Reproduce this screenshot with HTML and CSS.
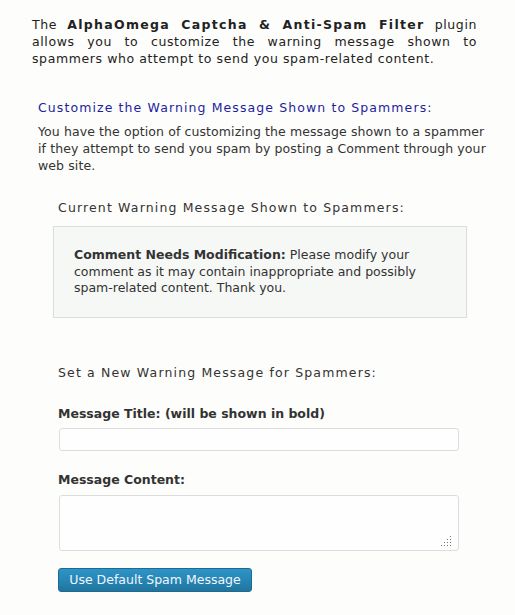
FILE: index.html
```html
<!DOCTYPE html>
<html>
<head>
<meta charset="utf-8">
<link rel="stylesheet" href="styles.css">
</head>
<body>
<div class="page">
  <p class="intro">The <strong>AlphaOmega Captcha &amp; Anti-Spam Filter</strong> plugin allows you to customize the warning message shown to spammers who attempt to send you spam-related content.</p>

  <section class="section">
    <h3 class="section-title">Customize the Warning Message Shown to Spammers:</h3>
    <p class="section-text">You have the option of customizing the message shown to a spammer<br>if they attempt to send you spam by posting a Comment through your<br>web site.</p>

    <div class="current">
      <h4 class="sub-title">Current Warning Message Shown to Spammers:</h4>
      <div class="message-box">
        <strong>Comment Needs Modification:</strong> Please modify your comment as it may contain inappropriate and possibly spam-related content. Thank you.
      </div>
    </div>

    <form class="new-form">
      <h4 class="sub-title">Set a New Warning Message for Spammers:</h4>
      <label class="field-label" for="msg-title">Message Title: (will be shown in bold)</label>
      <input class="text-input" id="msg-title" type="text">
      <label class="field-label field-label-2" for="msg-content">Message Content:</label>
      <textarea class="text-area" id="msg-content"></textarea>
      <button class="btn-primary" type="button">Use Default Spam Message</button>
    </form>
  </section>
</div>
</body>
</html>
```

FILE: styles.css
```css
html, body {
  margin: 0;
  padding: 0;
  background: #fdfdfb;
}

body {
  font-family: "DejaVu Sans", "Liberation Sans", sans-serif;
  font-size: 12.5px;
  color: #333;
}

.page {
  padding: 16px 38px 20px 32px;
}

.intro {
  margin: 0;
  line-height: 17px;
  text-align: justify;
  letter-spacing: 0.6px;
  color: #222;
}

.intro strong {
  letter-spacing: 1.3px;
}

.section {
  margin-top: 32px;
  padding-left: 6px;
}

.section-title {
  margin: 0;
  font-size: 12.5px;
  font-weight: normal;
  line-height: 17px;
  letter-spacing: 1.1px;
  color: #1d1d9e;
}

.section-text {
  margin: 7px -16px 0 0;
  font-size: 12.5px;
  letter-spacing: 0.1px;
  line-height: 17px;
  color: #333;
}

.current {
  margin-top: 25px;
  width: 414px;
  margin-left: 15px;
}

.sub-title {
  margin: 0 0 0 5px;
  font-size: 12.5px;
  font-weight: normal;
  line-height: 17px;
  letter-spacing: 1.15px;
  color: #333;
}

.message-box {
  margin-top: 10px;
  background: #f6f8f6;
  border: 1px solid #dcdcdc;
  padding: 20px 20px 20px 20px;
  line-height: 16.5px;
  color: #333;
}

.new-form {
  display: flex;
  flex-direction: column;
  align-items: flex-start;
  margin-top: 46px;
  margin-left: 15px;
}

.field-label {
  margin: 24px 0 0 5px;
  font-weight: bold;
  line-height: 17px;
  color: #333;
}

.field-label-2 {
  margin-top: 20px;
}

.text-input {
  margin: 6px 0 0 6px;
  box-sizing: border-box;
  width: 400px;
  height: 23px;
  border: 1px solid #dddddd;
  border-radius: 3px;
  background: #fefefe;
  font: inherit;
  padding: 2px 4px;
}

.text-area {
  margin: 7px 0 0 6px;
  box-sizing: border-box;
  width: 400px;
  height: 56px;
  border: 1px solid #dddddd;
  border-radius: 3px;
  background-color: #fefefe;
  background-image: url("data:image/svg+xml,%3Csvg xmlns='http://www.w3.org/2000/svg' width='10' height='10' fill='%23777'%3E%3Crect x='9' y='0' width='1' height='1'/%3E%3Crect x='6' y='3' width='1' height='1'/%3E%3Crect x='9' y='3' width='1' height='1'/%3E%3Crect x='3' y='6' width='1' height='1'/%3E%3Crect x='6' y='6' width='1' height='1'/%3E%3Crect x='9' y='6' width='1' height='1'/%3E%3Crect x='0' y='9' width='1' height='1'/%3E%3Crect x='3' y='9' width='1' height='1'/%3E%3Crect x='6' y='9' width='1' height='1'/%3E%3Crect x='9' y='9' width='1' height='1'/%3E%3C/svg%3E");
  background-repeat: no-repeat;
  background-position: right 7px bottom 4px;
  font: inherit;
  padding: 2px 4px;
  resize: none;
}

.btn-primary {
  margin: 17px 0 0 5px;
  box-sizing: border-box;
  width: 194px;
  height: 24px;
  border: 1px solid #1f6a92;
  border-radius: 3px;
  background: linear-gradient(to bottom, #2e94c6, #2583b3 60%, #21759b);
  color: #f2f6fa;
  font-family: "DejaVu Sans", "Liberation Sans", sans-serif;
  font-size: 12.5px;
  line-height: 20px;
  padding: 0;
  cursor: pointer;
}
```
